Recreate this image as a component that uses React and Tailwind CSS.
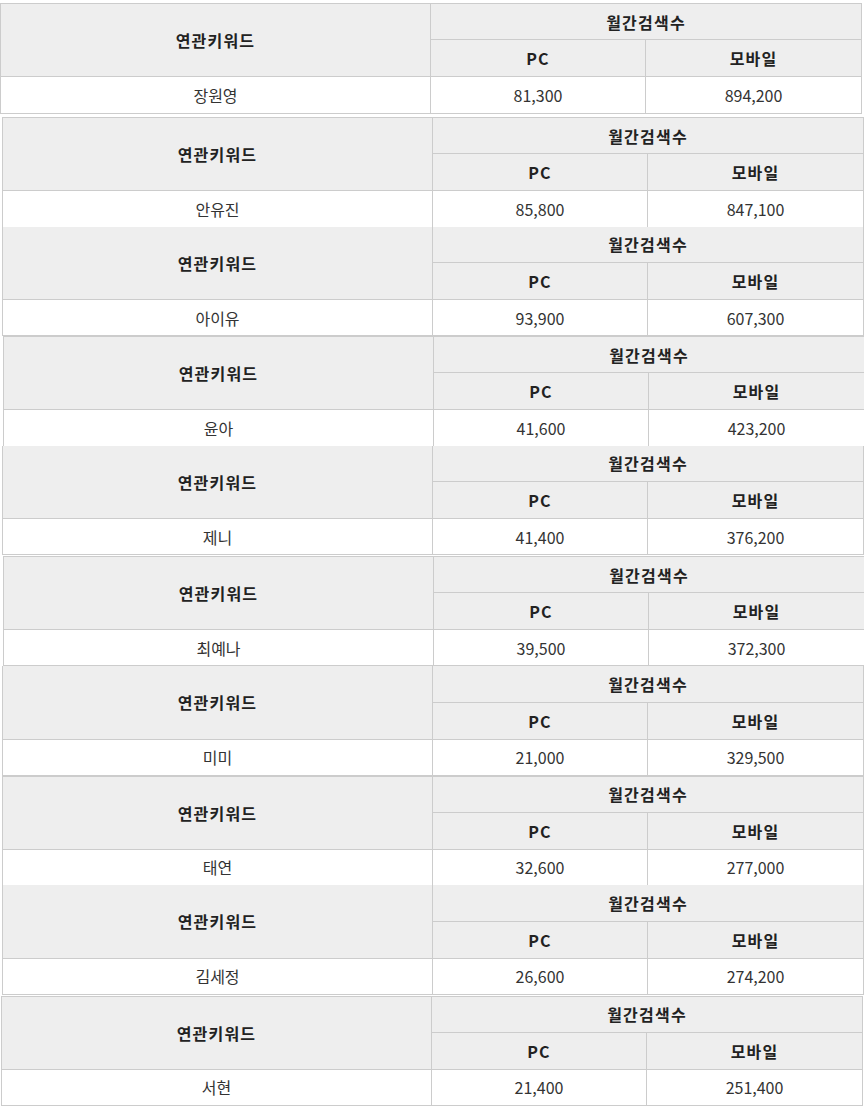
import React from "react";

const rows = [
  { k: "장원영", pc: "81,300", m: "894,200", ml: "ml-0", mt: "mt-[3px]", top: true, bottom: true, last: "h-[37px]" },
  { k: "안유진", pc: "85,800", m: "847,100", ml: "ml-[2px]", mt: "mt-[3px]", top: true, bottom: false },
  { k: "아이유", pc: "93,900", m: "607,300", ml: "ml-[2px]", mt: "mt-0", top: false, bottom: true },
  { k: "윤아", pc: "41,600", m: "423,200", ml: "ml-[3px]", mt: "mt-0", top: true, bottom: false },
  { k: "제니", pc: "41,400", m: "376,200", ml: "ml-[2px]", mt: "mt-0", top: false, bottom: true },
  { k: "최예나", pc: "39,500", m: "372,300", ml: "ml-[3px]", mt: "mt-[1px]", top: true, bottom: true },
  { k: "미미", pc: "21,000", m: "329,500", ml: "ml-[2px]", mt: "mt-0", top: false, bottom: true },
  { k: "태연", pc: "32,600", m: "277,000", ml: "ml-[2px]", mt: "mt-0", top: true, bottom: false },
  { k: "김세정", pc: "26,600", m: "274,200", ml: "ml-[2px]", mt: "mt-0", top: false, bottom: true },
  { k: "서현", pc: "21,400", m: "251,400", ml: "ml-[1px]", mt: "mt-[1px]", top: true, bottom: true },
];

function KTable({ r }) {
  const th = "bg-[#eeeeee] border border-[#cccccc] text-[#222222] font-bold text-[16px] leading-[20px] tracking-[1.2px] text-center p-0";
  const td = "bg-white border border-[#cccccc] text-[#333333] text-[16px] leading-[20px] text-center p-0";
  const topB = r.top ? "" : "border-t-0";
  const botB = r.bottom ? "" : "border-b-0";
  return (
    <table className={`${r.ml} ${r.mt} w-[861px] border-collapse table-fixed`}>
      <colgroup>
        <col className="w-[430px]" />
        <col className="w-[215px]" />
        <col className="w-[216px]" />
      </colgroup>
      <tbody>
        <tr className="h-[36px]">
          <th rowSpan={2} className={`${th} ${topB}`}>연관키워드</th>
          <th colSpan={2} className={`${th} ${topB}`}>월간검색수</th>
        </tr>
        <tr className="h-[37px]">
          <th className={th}>PC</th>
          <th className={th}>모바일</th>
        </tr>
        <tr className={r.last || "h-[36px]"}>
          <td className={`${td} ${botB}`}>{r.k}</td>
          <td className={`${td} ${botB}`}>{r.pc}</td>
          <td className={`${td} ${botB}`}>{r.m}</td>
        </tr>
      </tbody>
    </table>
  );
}

export default function App() {
  return (
    <div
      className="w-[864px] bg-white"
      style={{ fontFamily: '"Noto Sans CJK KR", "Noto Sans", sans-serif' }}
    >
      {rows.map((r, i) => (
        <KTable key={i} r={r} />
      ))}
    </div>
  );
}
